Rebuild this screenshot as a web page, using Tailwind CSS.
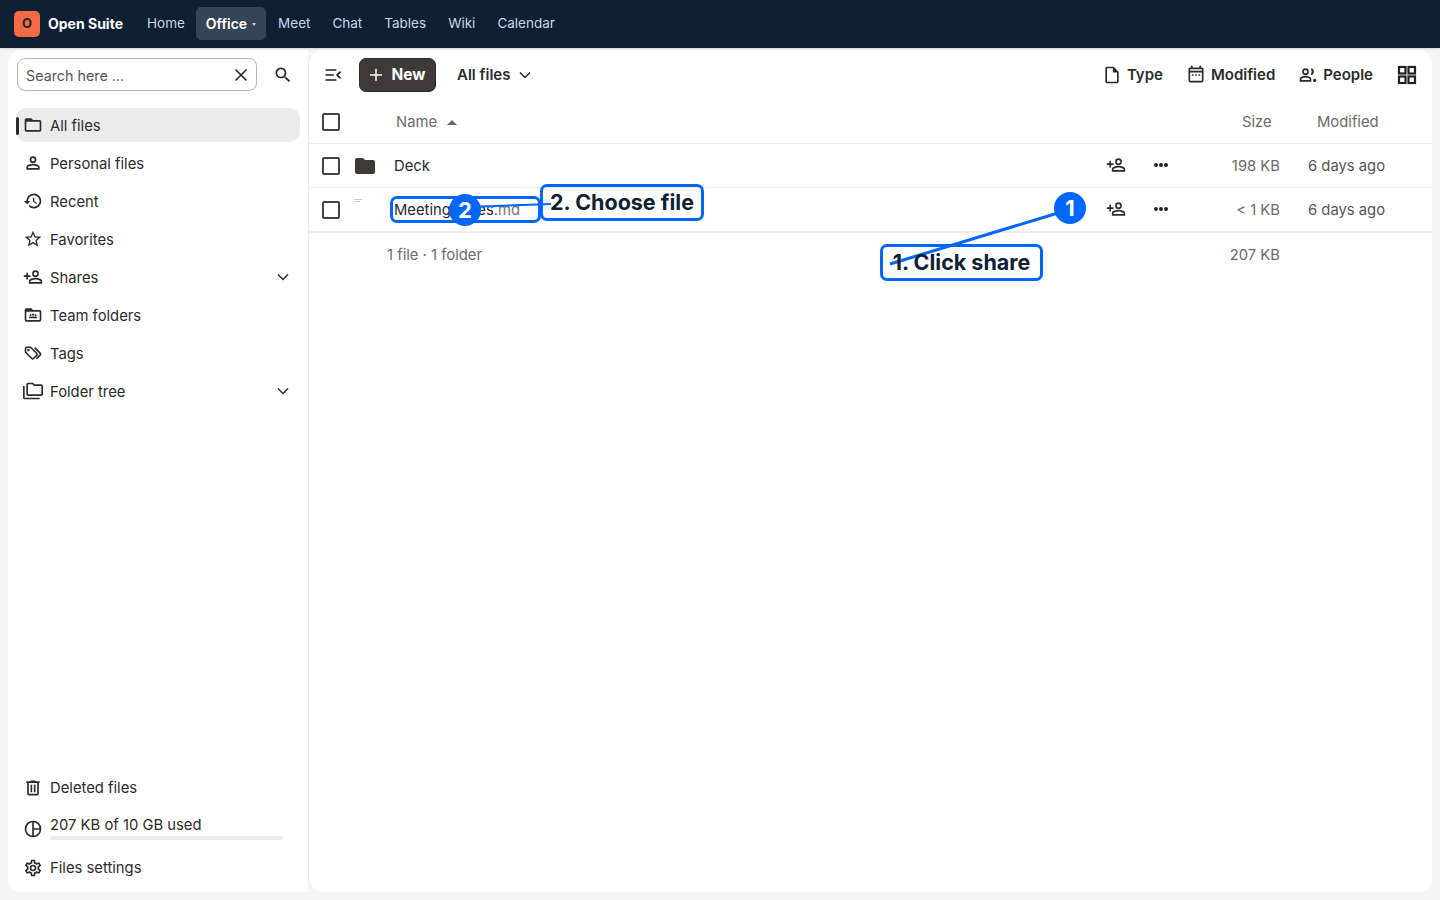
<!DOCTYPE html>
<html lang="en">
<head>
    <meta charset="UTF-8">
    <title>All files - Open Suite</title>
    <script src="https://cdn.jsdelivr.net/npm/@tailwindcss/browser@4"></script>
</head>
<body class="bg-[#f5f5f5] font-['Inter',sans-serif] text-[#222] overflow-hidden">
<div class="relative w-[1440px] h-[900px] flex flex-col">

    <!-- top bar -->
    <header class="h-12 bg-[#0f2035] flex items-center pl-[14px] text-[13.5px] text-[#cbd5e1] shadow-sm">
        <div class="w-[26px] h-[26px] rounded-[5px] bg-[#f46a45] flex items-center justify-center text-[#222] text-[13px] font-bold">O</div>
        <span class="ml-2 mr-[13px] -mt-[2px] text-[14px] text-white font-bold">Open Suite</span>
        <a class="px-[11px] -mt-[2px]">Home</a>
        <a class="h-[33px] px-[10px] rounded-[5px] bg-[#354457] text-white font-semibold text-[14px] flex items-center gap-[5px] -mt-px">Office <span class="w-0 h-0 mt-[2px] border-x-2 border-x-transparent border-t-[3px] border-t-[#cbd5e1]"></span></a>
        <a class="pl-3 pr-[11px] -mt-[2px]">Meet</a>
        <a class="px-[11px] -mt-[2px]">Chat</a>
        <a class="px-[11px] -mt-[2px]">Tables</a>
        <a class="px-[11px] -mt-[2px]">Wiki</a>
        <a class="px-[11px] -mt-[2px]">Calendar</a>
    </header>

    <div class="flex-1 flex pl-2 pr-2 pt-[2px] pb-2 min-h-0">
        <!-- sidebar -->
        <aside class="w-[300px] bg-white rounded-l-[14px] flex flex-col text-[14.8px] text-[#2b2b2b]">
            <div class="flex items-center pl-[9px] pt-[8px]">
                <div class="w-[240px] h-[33px] border border-[#b5b5b5] rounded-[8px] pl-2 pr-[7px] flex items-center justify-between text-[#555]">
                    <span class="text-[14.3px] mt-[3px]">Search here ...</span>
                    <svg class="w-4 h-4" viewBox="0 0 16 16" fill="none" stroke="#222" stroke-width="1.5"><path d="M2.5 2.5l11 11M13.5 2.5l-11 11"/></svg>
                </div>
                <svg class="w-5 h-5 ml-4" viewBox="0 0 24 24" fill="#222"><path d="M9.5 3A6.5 6.5 0 0116 9.5c0 1.61-.59 3.09-1.56 4.23l.27.27h.79l5 5-1.5 1.5-5-5v-.79l-.27-.27A6.52 6.52 0 019.5 16 6.5 6.5 0 013 9.5 6.5 6.5 0 019.5 3m0 2C7 5 5 7 5 9.5S7 14 9.5 14 14 12 14 9.5 12 5 9.5 5z"/></svg>
            </div>

            <nav class="mt-[17px] flex flex-col gap-1">
                <a class="relative h-[34px] ml-2 mr-2 rounded-[10px] bg-[#ebebeb] flex items-center pl-[7px] gap-[7px]">
                    <span class="absolute left-0 top-[9px] w-[3px] h-[18px] bg-[#2b2b2b] rounded-sm"></span>
                    <svg class="w-5 h-5" viewBox="0 0 24 24" fill="#2b2b2b"><path d="M20 18H4V8h16m0-2h-8l-2-2H4c-1.11 0-2 .89-2 2v12a2 2 0 002 2h16a2 2 0 002-2V8a2 2 0 00-2-2z"/></svg>
                    <span class="mt-[2px]">All files</span>
                </a>
                <a class="h-[34px] pl-[15px] flex items-center gap-[7px]">
                    <svg class="w-5 h-5" viewBox="0 0 24 24" fill="#2b2b2b"><path d="M12 4a4 4 0 014 4 4 4 0 01-4 4 4 4 0 01-4-4 4 4 0 014-4m0 2a2 2 0 00-2 2 2 2 0 002 2 2 2 0 002-2 2 2 0 00-2-2m0 7c2.67 0 8 1.33 8 4v3H4v-3c0-2.67 5.33-4 8-4m0 1.9c-2.97 0-6.1 1.46-6.1 2.1v1.1h12.2V17c0-.64-3.13-2.1-6.1-2.1z"/></svg>
                    <span class="mt-[2px]">Personal files</span>
                </a>
                <a class="h-[34px] pl-[15px] flex items-center gap-[7px]">
                    <svg class="w-5 h-5" viewBox="0 0 24 24" fill="#2b2b2b"><path d="M13.5 8H12v5l4.28 2.54.72-1.21-3.5-2.08V8M13 3a9 9 0 00-9 9H1l3.96 4.03L9 12H6a7 7 0 017-7 7 7 0 017 7 7 7 0 01-7 7c-1.93 0-3.68-.79-4.94-2.06l-1.42 1.42A8.896 8.896 0 0013 21a9 9 0 009-9 9 9 0 00-9-9"/></svg>
                    <span class="mt-[2px]">Recent</span>
                </a>
                <a class="h-[34px] pl-[15px] flex items-center gap-[7px]">
                    <svg class="w-5 h-5" viewBox="0 0 24 24" fill="#2b2b2b"><path d="M12 15.39l-3.76 2.27.99-4.28-3.32-2.88 4.38-.37L12 6.09l1.71 4.04 4.38.37-3.32 2.88.99 4.28M22 9.24l-7.19-.61L12 2 9.19 8.63 2 9.24l5.45 4.73L5.82 21 12 17.27 18.18 21l-1.64-7.03L22 9.24z"/></svg>
                    <span class="mt-[2px]">Favorites</span>
                </a>
                <a class="h-[34px] pl-[15px] pr-[17px] flex items-center gap-[7px]">
                    <svg class="w-5 h-5" viewBox="0 0 24 24" fill="#2b2b2b"><path d="M15 4a4 4 0 00-4 4 4 4 0 004 4 4 4 0 004-4 4 4 0 00-4-4m0 1.9a2.1 2.1 0 110 4.2A2.1 2.1 0 0115 5.9M4 7v3H1v2h3v3h2v-3h3v-2H6V7H4m11 6c-2.67 0-8 1.33-8 4v3h16v-3c0-2.67-5.33-4-8-4m0 1.9c2.97 0 6.1 1.46 6.1 2.1v1.1H8.9V17c0-.64 3.1-2.1 6.1-2.1z"/></svg>
                    <span class="mt-[2px]">Shares</span>
                    <svg class="w-4 h-4 ml-auto" viewBox="0 0 16 16" fill="none" stroke="#2b2b2b" stroke-width="1.5"><path d="M3 5.500l5 5 5-5"/></svg>
                </a>
                <a class="h-[34px] pl-[15px] flex items-center gap-[7px]">
                    <svg class="w-5 h-5" viewBox="0 0 24 24" fill="#2b2b2b"><path fill-rule="evenodd" d="M4 4h6l2 2h8a2 2 0 012 2v10a2 2 0 01-2 2H4a2 2 0 01-2-2V6a2 2 0 012-2zm0 4v10h16V8H4z"/><circle cx="9" cy="12" r="1.2"/><circle cx="12" cy="11.5" r="1.3"/><circle cx="15" cy="12" r="1.2"/><path d="M7 16c0-1.4 1-2.2 2-2.2h6c1 0 2 .8 2 2.2H7z"/></svg>
                    <span class="mt-[2px]">Team folders</span>
                </a>
                <a class="h-[34px] pl-[15px] flex items-center gap-[7px]">
                    <svg class="w-5 h-5" viewBox="0 0 24 24" fill="none" stroke="#2b2b2b" stroke-width="1.9"><path d="M3 6.5V11l7.6 7.6a1.4 1.4 0 002 0l4-4a1.4 1.4 0 000-2L9 5H4.500A1.500 1.500 0 003 6.500z"/><path d="M14 5.500l7 7.200a1 1 0 010 1.300l-5 5"/><circle cx="6.500" cy="8.500" r=".6" fill="#2b2b2b"/></svg>
                    <span class="mt-[2px]">Tags</span>
                </a>
                <a class="h-[34px] pl-[15px] pr-[17px] flex items-center gap-[7px]">
                    <svg class="w-5 h-5" viewBox="0 0 24 24" fill="#2b2b2b"><path d="M22 4h-8l-2-2H6a2 2 0 00-2 2v12a2 2 0 002 2h16a2 2 0 002-2V6a2 2 0 00-2-2zm0 12H6V4h5.170l2 2H22v10zM2 6H0v14a2 2 0 002 2h18v-2H2V6z"/></svg>
                    <span class="mt-[2px]">Folder tree</span>
                    <svg class="w-4 h-4 ml-auto" viewBox="0 0 16 16" fill="none" stroke="#2b2b2b" stroke-width="1.5"><path d="M3 5.500l5 5 5-5"/></svg>
                </a>
            </nav>

            <div class="mt-auto pb-[7px] flex flex-col">
                <a class="h-[34px] pl-[15px] flex items-center gap-[7px]">
                    <svg class="w-5 h-5" viewBox="0 0 24 24" fill="#2b2b2b"><path d="M9 3v1H4v2h1v13a2 2 0 002 2h10a2 2 0 002-2V6h1V4h-5V3H9M7 6h10v13H7V6m2 2v9h2V8H9m4 0v9h2V8h-2z"/></svg>
                    Deleted files
                </a>
                <div class="h-[46px] pl-[15px] flex items-center gap-[7px]">
                    <svg class="w-5 h-5 mt-px" viewBox="0 0 24 24" fill="none" stroke="#2b2b2b" stroke-width="2"><circle cx="12" cy="12" r="9"/><path d="M12 3v18M12 12h9"/></svg>
                    <div class="w-[233px] -mt-px">
                        <div class="leading-[18px] translate-y-px">207 KB of 10 GB used</div>
                        <div class="mt-[3px] h-1 rounded-full bg-[#ebebeb]"></div>
                    </div>
                </div>
                <a class="h-[34px] pl-[15px] flex items-center gap-[7px]">
                    <svg class="w-5 h-5" viewBox="0 0 24 24" fill="#2b2b2b"><path d="M12 8a4 4 0 014 4 4 4 0 01-4 4 4 4 0 01-4-4 4 4 0 014-4m0 2a2 2 0 00-2 2 2 2 0 002 2 2 2 0 002-2 2 2 0 00-2-2m-2 12c-.25 0-.46-.18-.5-.42l-.37-2.65c-.63-.25-1.17-.59-1.69-.99l-2.49 1.01c-.22.08-.49 0-.61-.22l-2-3.46a.493.493 0 01.12-.64l2.11-1.66L4.500 12l.07-1-2.11-1.63a.493.493 0 01-.12-.64l2-3.46c.12-.22.39-.31.61-.22l2.49 1c.52-.39 1.06-.73 1.69-.98l.37-2.65c.04-.24.25-.42.5-.42h4c.25 0 .46.18.5.42l.37 2.65c.63.25 1.17.59 1.69.98l2.49-1c.22-.09.49 0 .61.22l2 3.46c.13.22.07.49-.12.64L19.43 11l.07 1-.07 1 2.11 1.63c.19.15.25.42.12.64l-2 3.46c-.12.22-.39.31-.61.22l-2.49-1c-.52.39-1.06.73-1.69.98l-.37 2.65c-.04.24-.25.42-.5.42h-4m1.250-18l-.37 2.61c-1.2.25-2.26.89-3.03 1.78L5.440 7.350l-.75 1.3L6.800 10.200a5.550 5.550 0 000 3.600l-2.120 1.560.75 1.3 2.430-1.040c.77.88 1.820 1.520 3.010 1.760l.37 2.620h1.520l.37-2.610c1.190-.25 2.240-.89 3.010-1.770l2.430 1.040.75-1.3-2.120-1.550c.4-1.170.4-2.440 0-3.610l2.110-1.550-.75-1.3-2.410 1.040a5.420 5.420 0 00-3.030-1.770L12.750 4h-1.500z"/></svg>
                    Files settings
                </a>
            </div>
        </aside>

        <!-- main -->
        <main class="flex-1 bg-white rounded-[14px] border-l border-[#ededed] flex flex-col text-[14.8px] text-[#2b2b2b] min-w-0">
            <div class="h-[50px] mb-[2px] flex items-center pl-[14px] pr-[15px] text-[15px] font-semibold">
                <svg class="w-5 h-5" viewBox="0 0 24 24" fill="none" stroke="#222" stroke-width="2"><path d="M3 6h13M3 12h10M3 18h13M21 8l-4 4 4 4"/></svg>
                <button class="ml-[16px] h-[34px] w-[77px] rounded-[7px] bg-[#3f3a38] text-white text-[15.5px] font-bold border border-[#2b2b2b] flex items-center justify-center gap-[8px]">
                    <svg class="w-[14px] h-[14px]" viewBox="0 0 14 14" fill="none" stroke="#fff" stroke-width="1.5"><path d="M7 1v12M1 7h12"/></svg>
                    New
                </button>
                <span class="ml-[21px]">All files</span>
                <svg class="w-4 h-4 ml-[7px]" viewBox="0 0 16 16" fill="none" stroke="#222" stroke-width="1.5"><path d="M3 5.500l5 5 5-5"/></svg>

                <div class="ml-auto flex items-center">
                    <svg class="w-5 h-5 mr-[5px]" viewBox="0 0 24 24" fill="#2b2b2b"><path d="M14 2H6a2 2 0 00-2 2v16a2 2 0 002 2h12a2 2 0 002-2V8l-6-6m4 18H6V4h7v5h5v11z"/></svg>
                    Type
                    <svg class="w-5 h-5 ml-[23px] mr-[5px]" viewBox="0 0 24 24" fill="#2b2b2b"><path d="M19 3h-1V1h-2v2H8V1H6v2H5a2 2 0 00-2 2v14a2 2 0 002 2h14a2 2 0 002-2V5a2 2 0 00-2-2m0 16H5V9h14v10M5 7V5h14v2H5m2 4h2v2H7zm4 0h2v2h-2zm4 0h2v2h-2z"/></svg>
                    Modified
                    <svg class="w-5 h-5 ml-[23px] mr-[5px]" viewBox="0 0 24 24" fill="#2b2b2b"><path fill-rule="evenodd" d="M9 4a4 4 0 100 8 4 4 0 000-8zm0 2a2 2 0 110 4 2 2 0 010-4zM9 13c-3 0-7 1.500-7 4v3h14v-3c0-2.500-4-4-7-4zm0 2c2.500 0 5 1.200 5 2v1H4v-1c0-.8 2.500-2 5-2z"/><path d="M15 4a4 4 0 010 8c1-1 1.300-2.500 1.300-4S16 5 15 4z"/><circle cx="20" cy="18.500" r="2"/></svg>
                    People
                    <svg class="w-[20px] h-[20px] ml-[24px]" viewBox="0 0 20 20" fill="none" stroke="#222" stroke-width="2.200"><rect x="2" y="2" width="6.500" height="6.500"/><rect x="11.500" y="2" width="6.500" height="6.500"/><rect x="2" y="11.500" width="6.500" height="6.500"/><rect x="11.500" y="11.500" width="6.500" height="6.500"/></svg>
                </div>
            </div>

            <!-- header row -->
            <div class="h-[42px] flex items-center border-b border-[#ededed] text-[#6b6b6b] pl-[13px]">
                <span class="w-[18px] h-[18px] -mt-px border-2 border-[#444] rounded-[2px]"></span>
                <span class="ml-[56px] mr-[10px]">Name</span>
                <span class="w-0 h-0 border-x-[5px] border-x-transparent border-b-[5px] border-b-[#666]"></span>
                <span class="w-[75px] ml-auto">Size</span>
                <span class="w-[115px]">Modified</span>
            </div>

            <!-- Deck -->
            <div class="h-[44px] flex items-center border-b border-[#ededed] pl-[13px]">
                <span class="w-[18px] h-[18px] border-2 border-[#444] rounded-[2px]"></span>
                <svg class="w-6 h-6 ml-[13px]" viewBox="0 0 24 24" fill="#3f3a38"><path d="M10 4H4a2 2 0 00-2 2v12a2 2 0 002 2h16a2 2 0 002-2V8a2 2 0 00-2-2h-8l-2-2z"/></svg>
                <span class="ml-[17px] mt-px">Deck</span>
                <svg class="w-5 h-5 ml-auto -mt-[2px]" viewBox="0 0 24 24" fill="#2b2b2b"><path d="M15 4a4 4 0 00-4 4 4 4 0 004 4 4 4 0 004-4 4 4 0 00-4-4m0 1.900a2.100 2.100 0 110 4.200A2.100 2.100 0 0115 5.900M4 7v3H1v2h3v3h2v-3h3v-2H6V7H4m11 6c-2.670 0-8 1.330-8 4v3h16v-3c0-2.670-5.330-4-8-4m0 1.900c2.970 0 6.100 1.460 6.100 2.100v1.100H8.900V17c0-.64 3.100-2.100 6.100-2.100z"/></svg>
                <span class="ml-[28px] -mt-[2px] flex gap-px"><i class="w-1 h-1 rounded-full bg-[#222]"></i><i class="w-1 h-1 rounded-full bg-[#222]"></i><i class="w-1 h-1 rounded-full bg-[#222]"></i></span>
                <span class="w-[112px] mt-px text-right text-[#6b6b6b]">198 KB</span>
                <span class="w-[152px] mt-px pl-[28px] text-[#555]">6 days ago</span>
            </div>

            <!-- Meeting notes -->
            <div class="h-[45px] flex items-center border-b-2 border-[#ededed] pl-[13px]">
                <span class="w-[18px] h-[18px] border-2 border-[#444] rounded-[2px]"></span>
                <span class="ml-[11px] w-5 h-[20px] -mt-[2px] flex flex-col gap-px pl-[3px]"><i class="w-2 h-px bg-[#ccc]"></i><i class="w-[6px] h-px bg-[#ccc]"></i></span>
                <span class="ml-[23px] mt-px">Meeting notes<span class="text-[#777]">.md</span></span>
                <svg class="w-5 h-5 ml-auto -mt-[2px]" viewBox="0 0 24 24" fill="#2b2b2b"><path d="M15 4a4 4 0 00-4 4 4 4 0 004 4 4 4 0 004-4 4 4 0 00-4-4m0 1.900a2.100 2.100 0 110 4.200A2.100 2.100 0 0115 5.900M4 7v3H1v2h3v3h2v-3h3v-2H6V7H4m11 6c-2.670 0-8 1.330-8 4v3h16v-3c0-2.670-5.330-4-8-4m0 1.900c2.970 0 6.100 1.460 6.100 2.100v1.100H8.900V17c0-.64 3.100-2.100 6.100-2.100z"/></svg>
                <span class="ml-[28px] -mt-[2px] flex gap-px"><i class="w-1 h-1 rounded-full bg-[#222]"></i><i class="w-1 h-1 rounded-full bg-[#222]"></i><i class="w-1 h-1 rounded-full bg-[#222]"></i></span>
                <span class="w-[112px] mt-px text-right text-[#6b6b6b]">&lt; 1 KB</span>
                <span class="w-[152px] mt-px pl-[28px] text-[#555]">6 days ago</span>
            </div>

            <!-- summary -->
            <div class="h-[45px] flex items-center text-[#6b6b6b] pl-[78px]">
                1 file · 1 folder
                <span class="ml-auto mr-[152px]">207 KB</span>
            </div>
        </main>
    </div>

    <!-- tutorial annotations over the page -->
    <svg class="absolute inset-0 pointer-events-none" width="1440" height="900" fill="none" stroke="#0066ff" stroke-width="3">
        <path d="M1058 213L890 264"/>
        <path d="M465 207L551 204" stroke-width="2"/>
    </svg>
    <div class="absolute left-[390px] top-[196px] w-[151px] h-[27px] border-[3px] border-[#0066ff] rounded-[7px]"></div>
    <div class="absolute left-[540px] top-[184px] w-[164px] h-[37px] border-[3px] border-[#0066ff] rounded-[7px] flex items-center justify-center text-[21.5px] font-bold text-[#0f2035]">2. Choose file</div>
    <div class="absolute left-[880px] top-[244px] w-[163px] h-[37px] border-[3px] border-[#0066ff] rounded-[7px] flex items-center justify-center text-[21.5px] font-bold text-[#0f2035]">1. Click share</div>
    <div class="absolute left-[449px] top-[194px] w-8 h-8 rounded-full bg-[#0066ff] text-white text-[22px] font-bold flex items-center justify-center">2</div>
    <div class="absolute left-[1054px] top-[192px] w-8 h-8 rounded-full bg-[#0066ff] text-white text-[22px] font-bold flex items-center justify-center">1</div>
</div>
</body>
</html>
